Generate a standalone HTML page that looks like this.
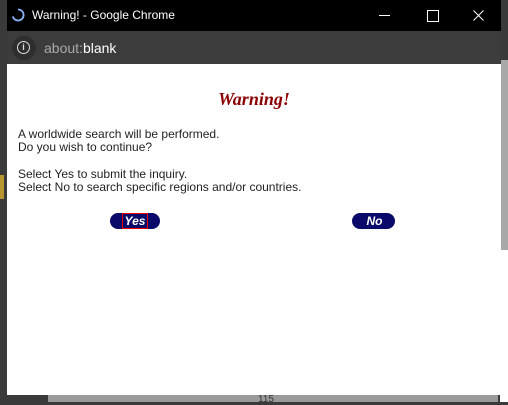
<!DOCTYPE html>
<html><head><style>
body{margin:0;width:508px;height:402px;overflow:hidden;background:#3a3a3a;position:relative;font-family:"Liberation Sans",sans-serif}
.r{position:absolute}
</style></head><body>
<div class="r" style="left:500px;top:60px;width:8px;height:190px;background:#a8a8a8"></div>
<div class="r" style="left:500px;top:250px;width:8px;height:152px;background:#fff"></div>
<div class="r" style="left:48px;top:395px;width:450px;height:7px;background:#9a9a9a"></div>
<div class="r" style="left:0;top:175px;width:4px;height:24px;background:#b8952e"></div>
<div class="r" style="left:7px;top:0;width:494px;height:31px;background:#000"></div>
<svg class="r" style="left:11px;top:8px" width="14" height="14"><path d="M7 1.5A5.5 5.5 0 1 1 1.8 8.5" fill="none" stroke="#8ab4f8" stroke-width="1.8"/></svg>
<div class="r" style="left:32px;top:8px;color:#fff;font-size:12px">Warning! - Google Chrome</div>
<div class="r" style="left:379px;top:15px;width:11px;height:1px;background:#fff"></div>
<div class="r" style="left:427px;top:10px;width:10px;height:10px;border:1px solid #fff"></div>
<svg class="r" style="left:473px;top:10px" width="11" height="11"><path d="M0.5 0.5L10.5 10.5M10.5 0.5L0.5 10.5" stroke="#fff" stroke-width="1"/></svg>
<div class="r" style="left:7px;top:31px;width:494px;height:33px;background:#3c3c3c"></div>
<div class="r" style="left:12px;top:36px;width:24px;height:24px;border-radius:50%;background:#2e2e2e"></div>
<div class="r" style="left:17px;top:41px;width:11px;height:11px;border:1.5px solid #ddd;border-radius:50%;color:#ddd;font-size:9px;line-height:11px;text-align:center;font-weight:bold">i</div>
<div class="r" style="left:44px;top:40px;font-size:14px;color:#aaa">about:<span style="color:#fff">blank</span></div>
<div class="r" style="left:7px;top:64px;width:494px;height:331px;background:#fff"></div>
<div class="r" style="left:0;top:89px;width:508px;text-align:center;font-family:'Liberation Serif',serif;font-style:italic;font-weight:bold;font-size:18px;color:#8b0000">Warning!</div>
<div class="r" style="left:18px;top:128px;font-size:12px;line-height:13.3px;color:#222">A worldwide search will be performed.<br>Do you wish to continue?<br><br>Select Yes to submit the inquiry.<br>Select No to search specific regions and/or countries.</div>
<div class="r" style="left:110px;top:213px;width:50px;height:16px;border-radius:8px;background:#0a0a6a;color:#fff;font-style:italic;font-weight:bold;font-size:12px;line-height:16px;text-align:center"><span style="outline:1px solid #e00;padding:0 2px">Yes</span></div>
<div class="r" style="left:352px;top:213px;width:43px;height:16px;border-radius:8px;background:#0a0a6a;color:#fff;font-style:italic;font-weight:bold;font-size:12px;line-height:16px;text-align:center;padding-left:2px;box-sizing:border-box">No</div>
<div class="r" style="left:258px;top:394px;font-size:10px;color:#333">115</div>
</body></html>
